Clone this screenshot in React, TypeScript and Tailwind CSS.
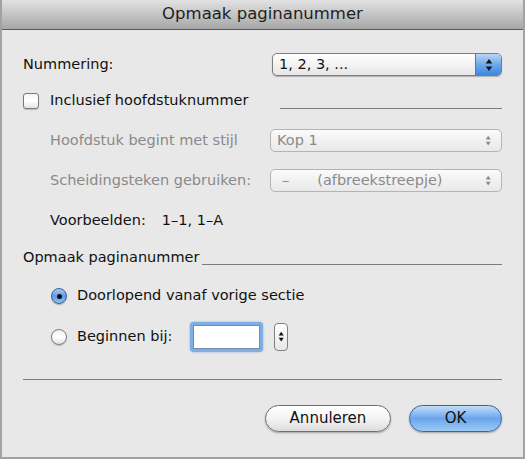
import React from "react";

const font = { fontFamily: '"DejaVu Sans", "Liberation Sans", sans-serif' };

function Arrows({ color = "#111", small = false }: { color?: string; small?: boolean }) {
  const s = small ? 0.8 : 1;
  return (
    <svg width={8 * s} height={14 * s} viewBox="0 0 8 14">
      <path d="M4 1 L7.2 5.5 L0.8 5.5 Z" fill={color} />
      <path d="M4 13 L7.2 8.5 L0.8 8.5 Z" fill={color} />
    </svg>
  );
}

function Select({
  children,
  disabled = false,
  className = "",
}: {
  children: React.ReactNode;
  disabled?: boolean;
  className?: string;
}) {
  if (!disabled) {
    return (
      <div
        className={`flex h-[23px] items-stretch rounded-[5px] border border-[#7d7d7d] bg-gradient-to-b from-[#ffffff] via-[#f3f3f3] to-[#e6e6e6] shadow-[0_1px_1px_rgba(0,0,0,0.25)] ${className}`}
      >
        <div className="flex flex-1 items-center pl-[6px] text-[14.5px] text-[#111]">{children}</div>
        <div className="flex w-[26px] items-center justify-center rounded-r-[4px] border-l border-[#4a78b8] bg-gradient-to-b from-[#b9d6f6] via-[#6ea8ea] to-[#3d87e0]">
          <Arrows />
        </div>
      </div>
    );
  }
  return (
    <div
      className={`flex h-[23px] items-stretch rounded-[5px] border border-[#b4b4b4] bg-gradient-to-b from-[#fbfbfb] via-[#f1f1f1] to-[#e9e9e9] ${className}`}
    >
      <div className="flex flex-1 items-center pl-[6px] text-[14.5px] text-[#8a8a8a]">{children}</div>
      <div className="flex w-[26px] items-center justify-center">
        <Arrows color="#8c8c8c" small />
      </div>
    </div>
  );
}

function Radio({ checked }: { checked: boolean }) {
  if (checked) {
    return (
      <div className="flex h-[16px] w-[16px] items-center justify-center rounded-full border border-[#3a5f94] bg-gradient-to-b from-[#a9cdf5] via-[#5d9ce6] to-[#8cc0f3] shadow-[0_1px_1px_rgba(0,0,0,0.25)]">
        <div className="h-[5px] w-[5px] rounded-full bg-[#111]" />
      </div>
    );
  }
  return (
    <div className="h-[16px] w-[16px] rounded-full border border-[#7a7a7a] bg-gradient-to-b from-[#f0f0f0] via-[#ffffff] to-[#e2e2e2] shadow-[0_1px_1px_rgba(0,0,0,0.2)]" />
  );
}

export default function App() {
  return (
    <div
      className="flex h-[459px] w-[525px] flex-col overflow-hidden border-b-2 border-l-2 border-r-2 border-[#a2a2a2] bg-[#e8e8e8]"
      style={font}
    >
      {/* Title bar */}
      <div className="flex h-[30px] shrink-0 items-center justify-center border-b border-[#5a5a5a] bg-gradient-to-b from-[#e2e2e2] to-[#a7a7a7]">
        <span className="text-[16.5px] text-[#1e1e1e]">Opmaak paginanummer</span>
      </div>

      <div className="flex flex-col pl-[21px] pr-[21px] text-[14.5px] text-[#111]">
        {/* Nummering */}
        <div className="mt-[23px] flex h-[23px] items-center">
          <span>Nummering:</span>
          <Select className="ml-auto w-[230px]">1, 2, 3, ...</Select>
        </div>

        {/* Checkbox */}
        <div className="mt-[13px] flex h-[24px] items-center">
          <div className="h-[16px] w-[16px] rounded-[3px] border border-[#7a7a7a] bg-gradient-to-b from-[#f6f6f6] via-[#ffffff] to-[#e3e3e3] shadow-[0_1px_1px_rgba(0,0,0,0.2)]" />
          <span className="ml-[11px]">Inclusief hoofdstuknummer</span>
          <div className="ml-auto mt-[15px] h-0 w-[222px] border-t border-[#7c7c7c]" />
        </div>

        {/* Hoofdstuk */}
        <div className="mt-[16px] flex h-[23px] items-center pl-[27px]">
          <span className="text-[#8a8a8a]">Hoofdstuk begint met stijl</span>
          <Select disabled className="ml-auto w-[232px]">
            Kop 1
          </Select>
        </div>

        {/* Scheidingsteken */}
        <div className="mt-[17px] flex h-[23px] items-center pl-[27px]">
          <span className="text-[#8a8a8a]">Scheidingsteken gebruiken:</span>
          <Select disabled className="ml-auto w-[232px]">
            <span className="ml-[5px]">–</span>
            <span className="ml-[28px]">(afbreekstreepje)</span>
          </Select>
        </div>

        {/* Voorbeelden */}
        <div className="mt-[17px] flex h-[24px] items-center pl-[27px]">
          <span>Voorbeelden:</span>
          <span className="ml-[16px]">1–1, 1–A</span>
        </div>

        {/* Section */}
        <div className="mt-[13px] flex h-[24px] items-center">
          <span>Opmaak paginanummer</span>
          <div className="ml-[3px] mt-[12px] h-0 flex-1 border-t border-[#7c7c7c]" />
        </div>

        <div className="mt-[14px] flex h-[24px] items-center pl-[28px]">
          <Radio checked />
          <span className="ml-[10px]">Doorlopend vanaf vorige sectie</span>
        </div>

        <div className="mt-[14px] flex h-[30px] items-center pl-[28px]">
          <Radio checked={false} />
          <span className="ml-[10px]">Beginnen bij:</span>
          <div className="ml-[18px] h-[30px] w-[73px] rounded-[4px] bg-[#7eaee6] p-[3px] shadow-[0_0_2px_rgba(60,120,200,0.6)]">
            <div className="h-full w-full border border-[#7a8ba3] bg-white" />
          </div>
          <div className="ml-[11px] flex h-[28px] w-[14px] items-center justify-center rounded-[4px] border border-[#808080] bg-gradient-to-b from-[#ffffff] to-[#e6e6e6]">
            <Arrows small />
          </div>
        </div>

        <div className="mt-[27px] h-0 w-full border-t border-[#7c7c7c]" />

        <div className="mt-[25px] flex h-[27px] items-center justify-end">
          <div className="flex h-[27px] w-[126px] items-center justify-center rounded-full border border-[#6f6f6f] bg-gradient-to-b from-[#ffffff] via-[#f4f4f4] to-[#dcdcdc] shadow-[0_1px_2px_rgba(0,0,0,0.3)] text-[15px]">
            Annuleren
          </div>
          <div className="ml-[18px] flex h-[27px] w-[93px] items-center justify-center rounded-full border border-[#3b64a0] bg-gradient-to-b from-[#c4ddf8] via-[#6aa5ec] to-[#9ccaf6] shadow-[0_1px_2px_rgba(0,0,0,0.3)] text-[15px]">
            OK
          </div>
        </div>
      </div>
    </div>
  );
}
